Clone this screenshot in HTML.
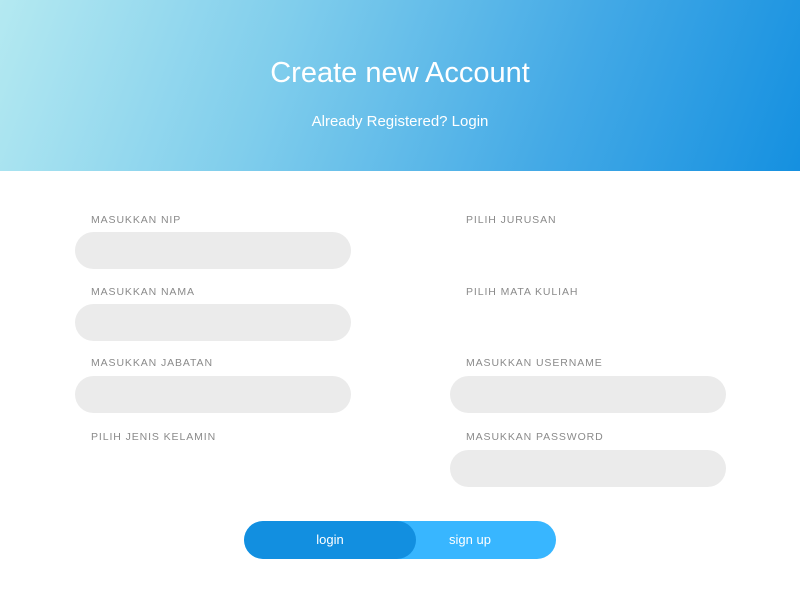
<!DOCTYPE html>
<html><head><style>
body{margin:0;width:800px;height:600px;overflow:hidden;background:#fff;font-family:"Liberation Sans",sans-serif;position:relative}
.hdr{position:absolute;left:0;top:0;width:800px;height:171px;background:linear-gradient(110deg,#b4e9f1 0%,#7fcdec 35%,#43a9e6 70%,#1590e0 100%);color:#fff;text-align:center}
.hdr h1{margin:0;position:absolute;top:57px;width:100%;font-weight:normal;font-size:29px}
.hdr p{margin:0;position:absolute;top:113px;width:100%;font-size:15px}
.lbl{position:absolute;font-size:10.5px;letter-spacing:0.9px;color:#8a8a8a}
.in{position:absolute;width:276px;height:37px;border-radius:19px;background:#ebebeb}
.btns{position:absolute;left:244px;top:521px;width:312px;height:38px;border-radius:19px;background:#38b6ff;overflow:hidden}
.lg{position:absolute;left:0;top:0;width:172px;height:38px;border-radius:19px;background:#128fe0;color:#fff;font-size:13px;line-height:38px;text-align:center}
.su{position:absolute;left:172px;top:0;width:108px;height:38px;color:#fff;font-size:13px;line-height:38px;text-align:center}
</style></head><body>
<div class="hdr"><h1>Create new Account</h1><p>Already Registered? Login</p></div>
<div class="lbl" style="left:91px;top:214px">MASUKKAN NIP</div>
<div class="in" style="left:75px;top:232px"></div>
<div class="lbl" style="left:91px;top:286px">MASUKKAN NAMA</div>
<div class="in" style="left:75px;top:304px"></div>
<div class="lbl" style="left:91px;top:357px">MASUKKAN JABATAN</div>
<div class="in" style="left:75px;top:376px"></div>
<div class="lbl" style="left:91px;top:431px">PILIH JENIS KELAMIN</div>
<div class="lbl" style="left:466px;top:214px">PILIH JURUSAN</div>
<div class="lbl" style="left:466px;top:286px">PILIH MATA KULIAH</div>
<div class="lbl" style="left:466px;top:357px">MASUKKAN USERNAME</div>
<div class="in" style="left:450px;top:376px"></div>
<div class="lbl" style="left:466px;top:431px">MASUKKAN PASSWORD</div>
<div class="in" style="left:450px;top:450px"></div>
<div class="btns"><div class="lg">login</div><div class="su">sign up</div></div>
</body></html>
